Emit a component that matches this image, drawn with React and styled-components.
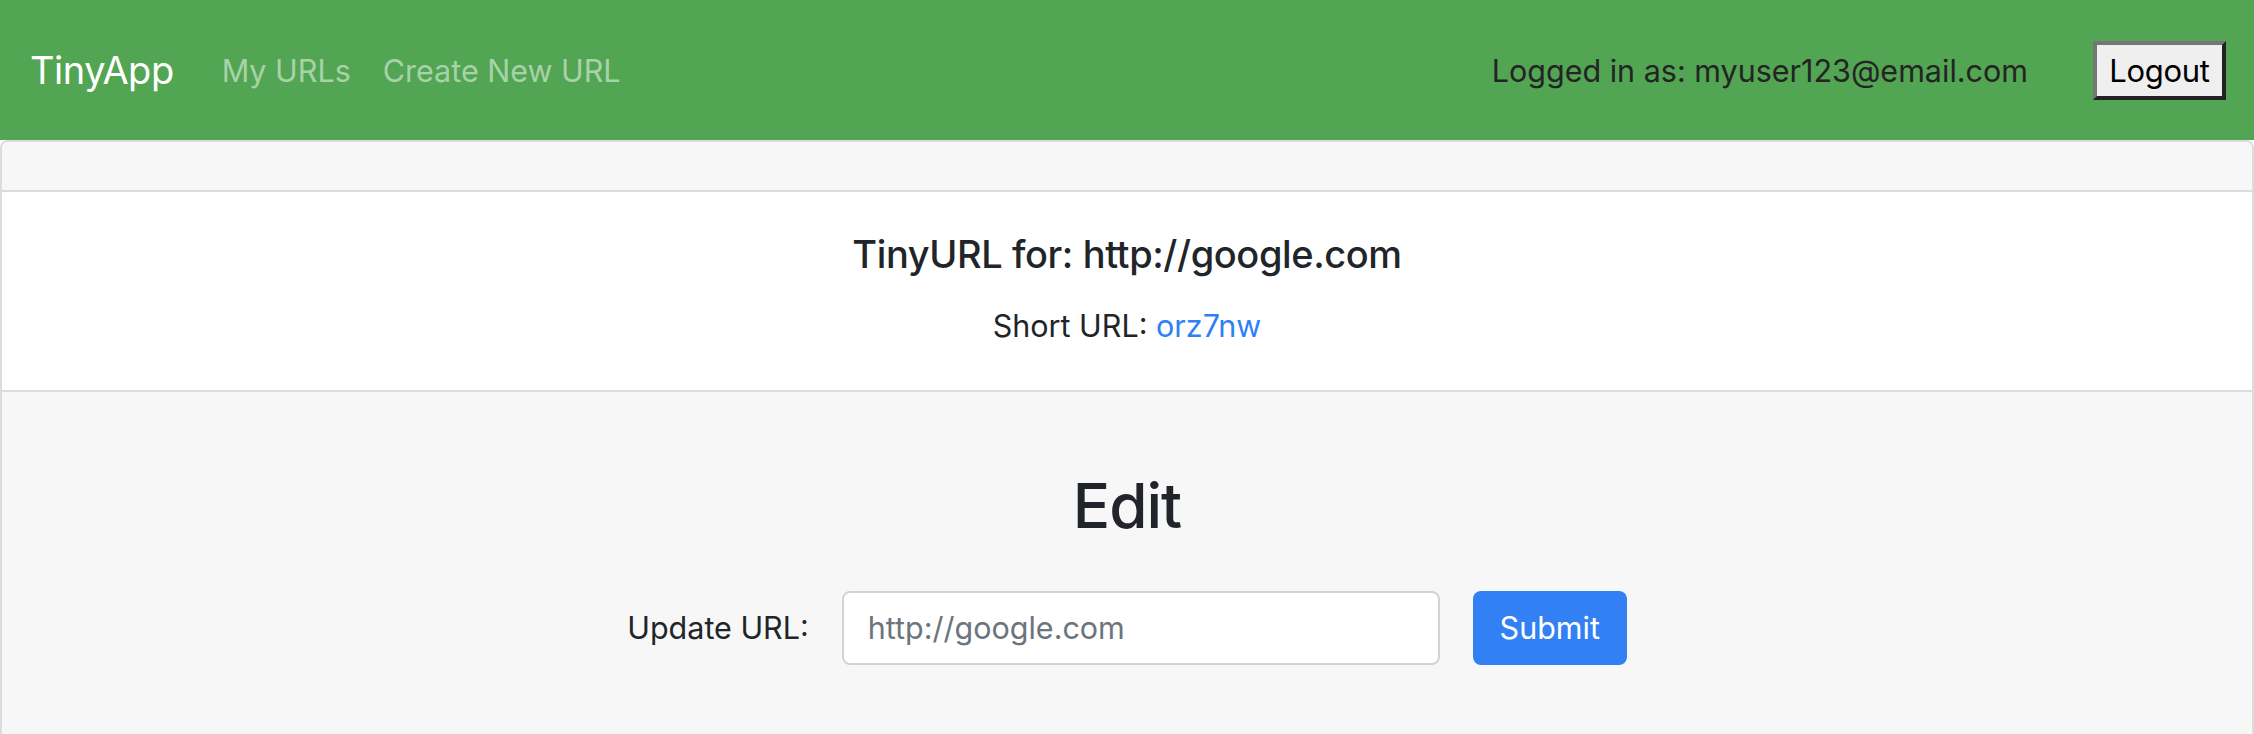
import React from "react";
import styled, { createGlobalStyle } from "styled-components";

const GlobalStyle = createGlobalStyle`
  body {
    margin: 0;
    font-family: Inter, "Liberation Sans", sans-serif;
    color: #212529;
    background: #ffffff;
  }
`;

export default function App() {
  return (
    <>
      <GlobalStyle />
      <Navbar>
        <Brand href="#">TinyApp</Brand>
        <NavLink href="#">My URLs</NavLink>
        <NavLink href="#">Create New URL</NavLink>
        <NavText>Logged in as: myuser123@email.com</NavText>
        <LogoutButton>Logout</LogoutButton>
      </Navbar>
      <Card>
        <CardHeader />
        <CardBody>
          <CardTitle>TinyURL for: http://google.com</CardTitle>
          <CardText>
            Short URL: <ShortLink href="#">orz7nw</ShortLink>
          </CardText>
        </CardBody>
        <CardFooter>
          <EditTitle>Edit</EditTitle>
          <EditForm onSubmit={(event) => event.preventDefault()}>
            <FormLabel htmlFor="long-url">Update URL:</FormLabel>
            <FormInput id="long-url" type="text" placeholder="http://google.com" />
            <SubmitButton type="submit">Submit</SubmitButton>
          </EditForm>
        </CardFooter>
      </Card>
    </>
  );
}

const Navbar = styled.nav`
  display: flex;
  align-items: center;
  height: 140px;
  padding: 0 28px 0 30px;
  background: #52a552;
  box-sizing: border-box;
`;
const Brand = styled.a`
  font-size: 38px;
  color: #ffffff;
  text-decoration: none;
  margin-right: 32px;
  letter-spacing: -0.5px;
`;
const NavLink = styled.a`
  font-size: 30.5px;
  color: rgba(255, 255, 255, 0.5);
  text-decoration: none;
  padding: 0 16px;
`;
const NavText = styled.span`
  margin-left: auto;
  font-size: 30.5px;
  color: #242424;
`;
const LogoutButton = styled.button`
  margin-left: 65px;
  width: 133px;
  height: 59px;
  font-family: inherit;
  font-size: 31px;
  color: #000000;
  background: #efefef;
  border: 4px solid;
  border-color: #767676 #222222 #222222 #767676;
  padding: 0;
  letter-spacing: -0.3px;
`;
const Card = styled.div`
  border: 2px solid #dcdcdc;
  border-radius: 8px;
  overflow: hidden;
`;
const CardHeader = styled.div`
  height: 48px;
  background: #f7f7f7;
  border-bottom: 2px solid #dcdcdc;
`;
const CardBody = styled.div`
  padding: 40px;
  text-align: center;
  background: #ffffff;
`;
const CardTitle = styled.h5`
  margin: 0 0 24px;
  font-size: 38px;
  font-weight: 500;
  line-height: 1.2;
  letter-spacing: -0.4px;
`;
const CardText = styled.p`
  margin: 0;
  font-size: 30.5px;
  line-height: 48px;
`;
const ShortLink = styled.a`
  color: #2f7ff6;
  text-decoration: none;
`;
const CardFooter = styled.div`
  min-height: 400px;
  padding: 75px 40px 24px;
  background: #f7f7f7;
  border-top: 2px solid #dcdcdc;
  text-align: center;
`;
const EditTitle = styled.h2`
  margin: 0 0 47px;
  font-size: 62px;
  font-weight: 500;
  line-height: 77px;
  letter-spacing: -1px;
`;
const EditForm = styled.form`
  display: flex;
  justify-content: center;
  align-items: center;
  gap: 33px;
`;
const FormLabel = styled.label`
  font-size: 30.5px;
`;
const FormInput = styled.input`
  width: 598px;
  height: 74px;
  box-sizing: border-box;
  padding: 12px 24px;
  font-family: inherit;
  font-size: 30.5px;
  color: #495057;
  background: #ffffff;
  border: 2px solid #ced4da;
  border-radius: 8px;
  &::placeholder {
    color: #6c757d;
  }
`;
const SubmitButton = styled.button`
  width: 154px;
  height: 74px;
  font-family: inherit;
  font-size: 30.5px;
  color: #ffffff;
  background: #3380f5;
  border: none;
  border-radius: 8px;
`;
